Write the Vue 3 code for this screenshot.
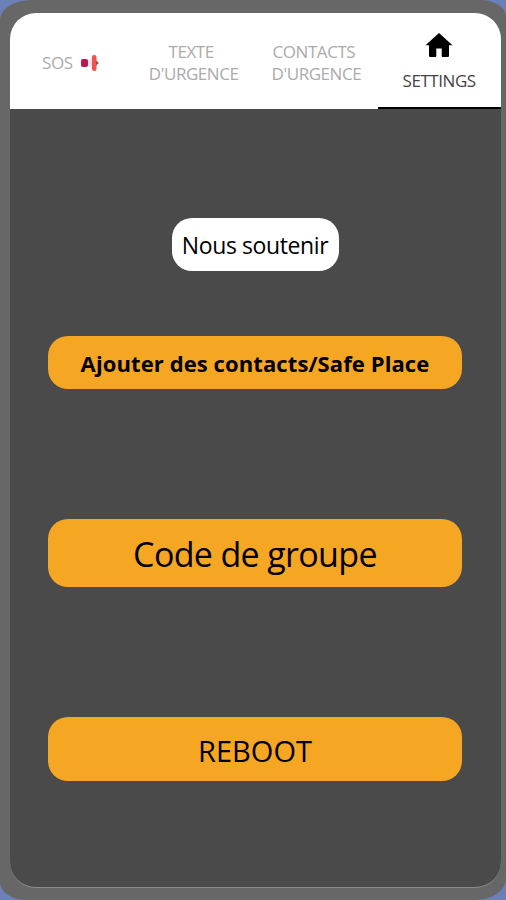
<template>
  <div class="phone">
    <div class="screen">
      <nav class="tabs">
        <button
          v-for="tab in tabs"
          :key="tab.id"
          class="tab"
          :class="[tab.id, { active: current === tab.id }]"
          @click="current = tab.id"
        >
          <svg v-if="tab.id === 'settings'" class="home" viewBox="0 0 28 26">
            <path d="M14 1 L27.5 13.3 H24 V24 Q24 25 23 25 H17.6 Q16.7 25 16.7 24 V16.5 H11.3 V24 Q11.3 25 10.4 25 H5 Q4 25 4 24 V13.3 H0.5 Z" />
          </svg>
          <span class="label">
            <span v-for="line in tab.lines" :key="line" class="line">{{ line }}</span>
          </span>
          <svg v-if="tab.id === 'sos'" class="siren" viewBox="0 0 20 18">
            <rect x="1" y="5" width="7" height="8" rx="2" fill="#bd1452" />
            <path d="M8 6 L12 4 V14 L8 12 Z" fill="#eee3e8" />
            <rect x="12" y="1" width="4.5" height="16" rx="2" fill="#ef5350" />
            <path d="M16 6.5 L19 9 L16 11.5 Z" fill="#a8474a" />
          </svg>
        </button>
      </nav>

      <main class="content">
        <button class="btn support">Nous soutenir</button>
        <button class="btn contacts">Ajouter des contacts/Safe Place</button>
        <button class="btn group">Code de groupe</button>
        <button class="btn reboot">REBOOT</button>
      </main>
    </div>
  </div>
</template>

<script setup>
import { ref } from "vue";

const current = ref("settings");

const tabs = [
  { id: "sos", lines: ["SOS"] },
  { id: "texte", lines: ["TEXTE", "D'URGENCE"] },
  { id: "contact", lines: ["CONTACTS", "D'URGENCE"] },
  { id: "settings", lines: ["SETTINGS"] },
];
</script>

<style>
body {
  background: #6c80b8;
}
</style>

<style scoped>
.phone {
  box-sizing: border-box;
  height: 900px;
  padding: 13px 5px 12px 10px;
  background: #676767;
  border-radius: 32px 26px 30px 26px / 20px 16px 22px 18px;
  font-family: "Open Sans", "Noto Sans", sans-serif;
}

.screen {
  box-sizing: border-box;
  display: flex;
  flex-direction: column;
  height: 875px;
  background: #4a4a4a;
  border-radius: 26px;
  border-bottom: 1px solid #8c8c8c;
  overflow: hidden;
}

.tabs {
  display: flex;
  height: 96px;
  background: #fff;
}

.tab {
  display: flex;
  flex: none;
  align-items: center;
  justify-content: center;
  box-sizing: border-box;
  width: 25%;
  padding: 4px 1px 0 0;
  border: none;
  background: none;
  color: #ababab;
  font-family: inherit;
  font-size: 17px;
  line-height: 22px;
  letter-spacing: -0.45px;
}

.line {
  display: block;
}

.line:not(:last-child) {
  padding-right: 5px;
}

.active {
  flex-direction: column;
  justify-content: flex-start;
  padding-top: 19px;
  border-bottom: 2px solid #000;
  color: #444;
}

.home {
  width: 28px;
  height: 26px;
  margin-bottom: 12px;
}

.siren {
  width: 20px;
  height: 18px;
  margin-left: 7px;
}

.content {
  display: flex;
  flex-direction: column;
  align-items: center;
  padding: 109px 1px 0 0;
}

.btn {
  width: 414px;
  padding: 0;
  border: none;
  border-radius: 20px;
  background: #f5a623;
  color: #000;
  font-family: inherit;
  white-space: nowrap;
}

.support {
  width: 167px;
  height: 53px;
  background: #fff;
  font-size: 23px;
  letter-spacing: -0.4px;
}

.contacts {
  height: 53px;
  margin-top: 65px;
  font-size: 22px;
  font-weight: 700;
  letter-spacing: 0.1px;
}

.group {
  height: 68px;
  margin-top: 130px;
  padding-top: 2px;
  font-size: 34px;
  letter-spacing: -0.65px;
}

.reboot {
  height: 64px;
  margin-top: 130px;
  padding-top: 2px;
  font-size: 29px;
}
</style>
